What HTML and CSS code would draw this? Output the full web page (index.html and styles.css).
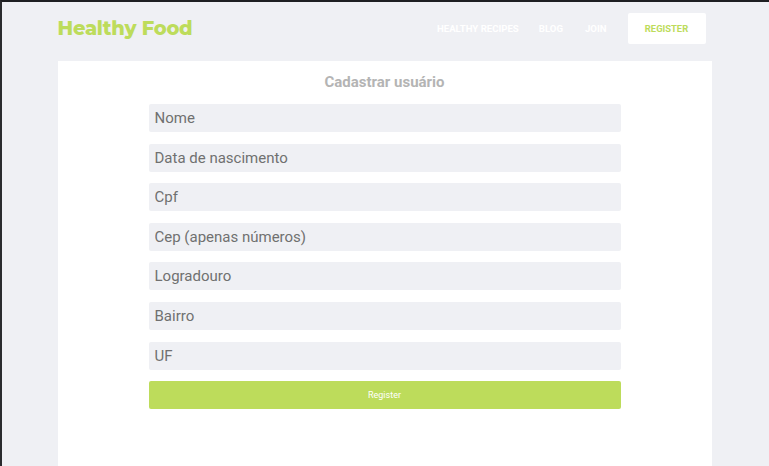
FILE: index.html
```html
<!DOCTYPE html>
<html lang="pt">
<head>
<meta charset="utf-8">
<title>Healthy Food</title>
<link rel="stylesheet" href="styles.css">
</head>
<body>
<div class="page">
  <header class="header">
    <div class="logo">Healthy Food</div>
    <nav class="nav">
      <a class="nav-link">HEALTHY RECIPES</a>
      <a class="nav-link">BLOG</a>
      <a class="nav-link">JOIN</a>
      <a class="nav-btn">REGISTER</a>
    </nav>
  </header>
  <main class="card">
    <h1 class="title">Cadastrar usuário</h1>
    <form class="form">
      <input class="field" placeholder="Nome">
      <input class="field" placeholder="Data de nascimento">
      <input class="field" placeholder="Cpf">
      <input class="field" placeholder="Cep (apenas números)">
      <input class="field" placeholder="Logradouro">
      <input class="field" placeholder="Bairro">
      <input class="field" placeholder="UF">
      <button class="submit" type="button">Register</button>
    </form>
  </main>
</div>
</body>
</html>
```
FILE: styles.css
```css
* { box-sizing: border-box; }
html, body { margin: 0; height: 100%; }
body {
  background: #eff0f4;
  font-family: Roboto, "Liberation Sans", sans-serif;
  border-top: 2px solid #1e1f22;
  border-left: 2px solid #2a2b2e;
  overflow: hidden;
}
.page {
  width: 654px;
  margin: 0 auto;
  height: 100%;
  display: flex;
  flex-direction: column;
  position: relative;
  left: -1px;
}
.header {
  height: 59px;
  display: flex;
  align-items: center;
  justify-content: space-between;
}
.logo {
  font-family: Montserrat, "Open Sans", sans-serif;
  font-weight: 800;
  font-size: 19.4px;
  color: #bddc5b;
  letter-spacing: -0.2px;
  margin-top: -7px;
}
.nav {
  display: flex;
  align-items: center;
  margin-top: -7px;
  margin-right: 6px;
}
.nav-link {
  color: #ffffff;
  font-size: 9.6px;
  font-weight: 700;
  margin-right: 20px;
}
.nav-link:nth-child(2) { margin-right: 22px; }
.nav-link:nth-child(3) { margin-right: 21px; }
.nav-btn {
  background: #ffffff;
  color: #bddc5b;
  font-size: 9.4px;
  font-weight: 700;
  width: 78px;
  height: 31px;
  display: flex;
  align-items: center;
  justify-content: center;
  border-radius: 2px;
}
.card {
  flex: 1;
  background: #ffffff;
  padding-top: 12px;
}
.title {
  margin: 0 0 12px;
  text-align: center;
  font-size: 15px;
  font-weight: 700;
  color: #b4b4b4;
  line-height: 19px;
}
.form {
  width: 472px;
  margin: 0 auto;
  display: flex;
  flex-direction: column;
  gap: 11.6px;
}
.field {
  height: 28px;
  border: none;
  border-radius: 2px;
  background: #eff0f4;
  padding: 0 6px;
  font-family: Roboto, "Liberation Sans", sans-serif;
  font-size: 15px;
  color: #666;
  outline: none;
}
.field::placeholder { color: #707070; }
.submit {
  height: 28px;
  border: none;
  border-radius: 2px;
  background: #bddc5b;
  color: #ffffff;
  font-family: Roboto, "Liberation Sans", sans-serif;
  font-size: 9px;
  padding: 0;
}
```
